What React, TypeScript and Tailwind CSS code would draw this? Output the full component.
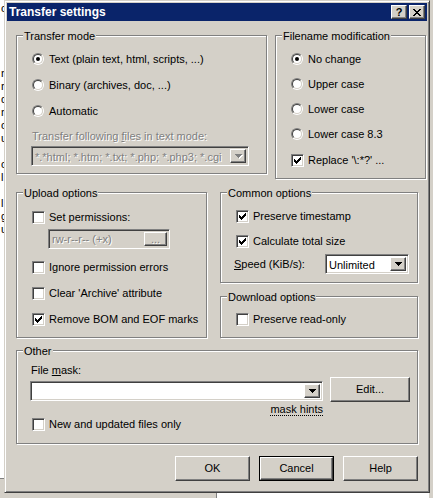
import React from 'react';

const raised =
  'border border-t-white border-l-white border-r-[#404040] border-b-[#404040] shadow-[inset_-1px_-1px_0_#808080,inset_1px_1px_0_#d4d0c8]';
const sunken =
  'border border-t-[#808080] border-l-[#808080] border-r-white border-b-white shadow-[inset_1px_1px_0_#404040,inset_-1px_-1px_0_#d4d0c8]';
const disabledText = 'text-[#808080] [text-shadow:1px_1px_0_#ffffff]';

// classic 7x7 check glyph, one 3px column per step
const CHECK_PATH =
  'M0 2h1v3h-1z M1 3h1v3h-1z M2 4h1v3h-1z M3 3h1v3h-1z M4 2h1v3h-1z M5 1h1v3h-1z M6 0h1v3h-1z';

const Group = ({ title, className, children }: { title: string; className: string; children?: React.ReactNode }) => (
  <div className={`relative shrink-0 border border-[#808080] shadow-[inset_1px_1px_0_#ffffff,1px_1px_0_#ffffff] ${className}`}>
    <span className="absolute -top-[7px] left-[6px] bg-[#d4d0c8] px-[1px] leading-[14px]">{title}</span>
    {children}
  </div>
);

const Radio = ({ label, checked = false }: { label: string; checked?: boolean }) => (
  <div className="flex h-[16px] items-center gap-[5px]">
    <span className="flex h-[12px] w-[12px] shrink-0 rounded-full border border-t-[#808080] border-l-[#808080] border-r-white border-b-white">
      <span className="flex h-full w-full items-center justify-center rounded-full border border-t-[#404040] border-l-[#404040] border-r-[#d4d0c8] border-b-[#d4d0c8] bg-white">
        {checked && <span className="h-[4px] w-[4px] rounded-full bg-black" />}
      </span>
    </span>
    <span>{label}</span>
  </div>
);

const Checkbox = ({ label, checked = false }: { label: React.ReactNode; checked?: boolean }) => (
  <div className="flex h-[16px] items-center gap-[4px]">
    <span className={`flex h-[13px] w-[13px] shrink-0 items-center justify-center bg-white ${sunken}`}>
      {checked && (
        <svg width="7" height="7" viewBox="0 0 7 7" shapeRendering="crispEdges">
          <path d={CHECK_PATH} fill="#000" />
        </svg>
      )}
    </span>
    <span>{label}</span>
  </div>
);

const DropButton = ({ disabled = false }: { disabled?: boolean }) => (
  <span className={`flex h-full w-[16px] shrink-0 items-center justify-center bg-[#d4d0c8] ${raised}`}>
    <svg width="7" height="4" viewBox="0 0 7 4" shapeRendering="crispEdges" className={disabled ? 'drop-shadow-[1px_1px_0_#ffffff]' : ''}>
      <path d="M0 0h7v1h-1v1h-1v1h-1v1h-1v-1h-1v-1h-1v-1h-1z" fill={disabled ? '#808080' : '#000'} />
    </svg>
  </span>
);

const Button = ({ label, focused = false, className = '' }: { label: string; focused?: boolean; className?: string }) =>
  focused ? (
    <div className={`border border-black ${className}`}>
      <div className={`flex h-full w-full items-center justify-center bg-[#d4d0c8] ${raised}`}>{label}</div>
    </div>
  ) : (
    <div className={`flex items-center justify-center bg-[#d4d0c8] ${raised} ${className}`}>{label}</div>
  );

const TitleButton = ({ children }: { children: React.ReactNode }) => (
  <div className={`flex h-[14px] w-[16px] items-center justify-center bg-[#d4d0c8] ${raised}`}>{children}</div>
);

// fragments of the list window sitting behind the dialog
const backLines = ['c', '', '', '', '', 'n', 'rl', 'd', 'm', 'o', 'u', '', 'c', 'l', '', 'l', 'g', 'u'];

export default function App() {
  return (
    <div className="relative h-[498px] w-[433px] overflow-hidden bg-white font-['Liberation_Sans',Arial,sans-serif] text-[11px] leading-[13px] text-black">
      <div className="flex h-full">
        <div className="flex w-[216px] flex-col">
          <div className="flex flex-col pt-[2px]">
            {backLines.map((t, i) => (
              <span key={i} className="h-[13px] pl-[1px]">{t}</span>
            ))}
          </div>
          <div className="mt-auto h-[20px] border-t border-[#808080] bg-[#d4d0c8]" />
        </div>
        <div className="flex-1 border-l border-[#808080] bg-white">
          <div className="ml-auto h-full w-[4px] bg-[#d4d0c8]" />
        </div>
      </div>

      {/* dialog window */}
      <div className="absolute left-[4px] top-0 flex h-[493px] w-[426px] flex-col border border-t-[#d4d0c8] border-l-[#d4d0c8] border-r-[#404040] border-b-[#404040] bg-[#d4d0c8] p-[2px] shadow-[inset_1px_1px_0_#ffffff,inset_-1px_-1px_0_#808080]">
        <div className="flex h-[18px] shrink-0 items-center bg-[#0a246a] pl-[2px] pr-[2px]">
          <span className="text-[12px] font-bold text-white">Transfer settings</span>
          <div className="ml-auto flex gap-[2px]">
            <TitleButton>
              <span className="font-bold leading-[11px]">?</span>
            </TitleButton>
            <TitleButton>
              <svg width="8" height="7" viewBox="0 0 8 7" shapeRendering="crispEdges">
                <path d="M0 0h2v1h1v1h2v-1h1v-1h2v1h-1v1h-1v1h-1v1h1v1h1v1h1v1h-2v-1h-1v-1h-2v1h-1v1h-2v-1h1v-1h1v-1h1v-1h-1v-1h-1v-1h-1z" fill="#000" />
              </svg>
            </TitleButton>
          </div>
        </div>

        <div className="flex flex-col pl-[9px]">
          {/* transfer mode + filename modification */}
          <div className="mt-[14px] flex items-start gap-[8px]">
            <Group title="Transfer mode" className="h-[139px] w-[251px]">
              <div className="flex flex-col px-[14px] pt-[15px]">
                <div className="ml-[1px] flex flex-col gap-[10px]">
                  <Radio label="Text (plain text, html, scripts, ...)" checked />
                  <Radio label="Binary (archives, doc, ...)" />
                  <Radio label="Automatic" />
                </div>
                <span className={`ml-[1px] mt-[11px] h-[16px] ${disabledText}`}>
                  Transfer following <u>f</u>iles in text mode:
                </span>
                <div className={`flex h-[20px] w-[218px] bg-[#d4d0c8] ${sunken} p-[2px]`}>
                  <span className={`flex-1 overflow-hidden whitespace-nowrap pl-[1px] leading-[16px] ${disabledText}`}>
                    *.*html; *.htm; *.txt; *.php; *.php3; *.cgi
                  </span>
                  <DropButton disabled />
                </div>
              </div>
            </Group>

            <Group title="Filename modification" className="h-[144px] w-[151px]">
              <div className="flex flex-col pl-[15px] pt-[15px]">
                <div className="flex flex-col gap-[9px]">
                  <Radio label="No change" checked />
                  <Radio label="Upper case" />
                  <Radio label="Lower case" />
                  <Radio label="Lower case 8.3" />
                </div>
                <div className="mt-[10px]">
                  <Checkbox label="Replace '\:*?' ..." checked />
                </div>
              </div>
            </Group>
          </div>

          {/* upload / common / download */}
          <div className="mt-[13px] flex items-start gap-[13px]">
            <Group title="Upload options" className="h-[146px] w-[191px]">
              <div className="flex flex-col pl-[15px] pt-[16px]">
                <Checkbox label="Set permissions:" />
                <div className={`ml-[16px] mt-[4px] flex h-[20px] w-[122px] items-center bg-[#d4d0c8] p-[2px] ${sunken}`}>
                  <span className={`flex-1 pl-[1px] ${disabledText}`}>rw-r--r-- (+x)</span>
                  <div className={`flex h-full w-[23px] items-center justify-center bg-[#d4d0c8] ${raised}`}>
                    <span className={`leading-[10px] ${disabledText}`}>...</span>
                  </div>
                </div>
                <div className="mt-[10px] flex flex-col gap-[10px]">
                  <Checkbox label="Ignore permission errors" />
                  <Checkbox label="Clear 'Archive' attribute" />
                  <Checkbox label="Remove BOM and EOF marks" checked />
                </div>
              </div>
            </Group>

            <div className="flex flex-col gap-[13px]">
              <Group title="Common options" className="h-[91px] w-[198px]">
                <div className="flex flex-col pl-[15px] pt-[15px]">
                  <div className="flex flex-col gap-[9px]">
                    <Checkbox label="Preserve timestamp" checked />
                    <Checkbox label="Calculate total size" checked />
                  </div>
                  <div className="-ml-[2px] mt-[5px] flex h-[20px] items-center">
                    <span className="w-[91px]">
                      <u>S</u>peed (KiB/s):
                    </span>
                    <div className={`flex h-[20px] w-[84px] bg-white p-[2px] ${sunken}`}>
                      <span className="flex-1 pl-[1px] leading-[16px]">Unlimited</span>
                      <DropButton />
                    </div>
                  </div>
                </div>
              </Group>

              <Group title="Download options" className="h-[42px] w-[198px]">
                <div className="pl-[15px] pt-[14px]">
                  <Checkbox label="Preserve read-only" />
                </div>
              </Group>
            </div>
          </div>

          {/* other */}
          <Group title="Other" className="mt-[12px] h-[94px] w-[402px]">
            <div className="flex pl-[13px] pt-[13px]">
              <div className="flex flex-col">
                <span className="ml-[1px] h-[14px]">
                  File <u>m</u>ask:
                </span>
                <div className={`mt-[3px] flex h-[20px] w-[293px] justify-end bg-white p-[2px] ${sunken}`}>
                  <DropButton />
                </div>
                <span className="mt-[2px] self-end border-b border-dotted border-black leading-[12px]">mask hints</span>
              </div>
              <Button label="Edit..." className="ml-[7px] mt-[13px] h-[25px] w-[80px]" />
            </div>
            <div className="pl-[15px]">
              <Checkbox label="New and updated files only" />
            </div>
          </Group>

          {/* dialog buttons */}
          <div className="mt-[12px] flex w-[402px] justify-end gap-[9px]">
            <Button label="OK" className="h-[25px] w-[75px]" />
            <Button label="Cancel" focused className="h-[25px] w-[75px]" />
            <Button label="Help" className="h-[25px] w-[75px]" />
          </div>
        </div>
      </div>
    </div>
  );
}
